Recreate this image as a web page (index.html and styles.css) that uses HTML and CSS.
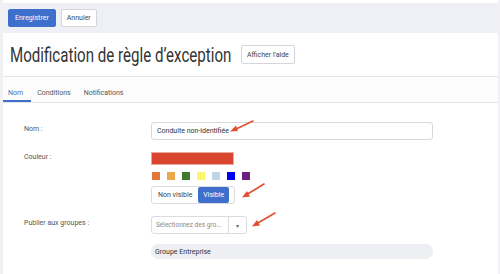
FILE: index.html
```html
<!DOCTYPE html>
<html lang="fr">
<head>
  <meta charset="UTF-8" />
  <title>Modification de règle d'exception</title>
  <link rel="stylesheet" href="styles.css">
</head>
<body>
  <div class="page">
    <div class="toolbar">
      <button class="btn btn-primary">Enregistrer</button>
      <button class="btn">Annuler</button>
    </div>

    <div class="heading">
      <h1><span class="title-text">Modification de règle d’exception</span></h1>
      <button class="btn btn-help">Afficher l'aide</button>
    </div>

    <div class="tabs">
      <span class="tab active">Nom</span>
      <span class="tab">Conditions</span>
      <span class="tab">Notifications</span>
    </div>

    <div class="form">
      <div class="row">
        <label class="lbl lbl-nom">Nom :</label>
        <input class="text-input" type="text" value="Conduite non-identifiée">
      </div>

      <div class="row">
        <label class="lbl lbl-couleur">Couleur :</label>
        <div class="color-field">
          <div class="color-bar"></div>
          <div class="swatches">
            <span class="sw" style="background:#e0773b"></span>
            <span class="sw" style="background:#eaa94e"></span>
            <span class="sw" style="background:#3e7a2c"></span>
            <span class="sw" style="background:#fbf66c"></span>
            <span class="sw" style="background:#bdd6e5"></span>
            <span class="sw" style="background:#0000f0"></span>
            <span class="sw" style="background:#6c1f7c"></span>
          </div>
          <div class="toggle">
            <span class="opt">Non visible</span>
            <span class="opt on">Visible</span>
          </div>
        </div>
      </div>

      <div class="row">
        <label class="lbl lbl-groupes">Publier aux groupes :</label>
        <div class="group-field">
          <div class="select">
            <span class="placeholder">Sélectionnez des gro...</span>
            <span class="caret">▾</span>
          </div>
          <div class="pill">Groupe Entreprise</div>
        </div>
      </div>
    </div>

    <svg class="arrows" width="500" height="274" viewBox="0 0 500 274">
      <g stroke="#e0502f" stroke-width="1.6" fill="#e0502f" stroke-linecap="round">
        <line x1="253" y1="121" x2="234" y2="130"/>
        <polygon points="230,131.5 236,125.5 238,131" stroke="none"/>
        <line x1="264" y1="184" x2="246" y2="195"/>
        <polygon points="242,197.5 247,191 250,196.5" stroke="none"/>
        <line x1="275" y1="213" x2="256" y2="224"/>
        <polygon points="252,226.5 257,220 260,225.5" stroke="none"/>
      </g>
    </svg>
  </div>
</body>
</html>
```

FILE: styles.css
```css
body {
  margin: 0;
  background: #f1f1f4;
  font-family: Roboto, "Liberation Sans", Arial, sans-serif;
  color: #333;
}

.page {
  position: relative;
  margin-left: 3px;
  margin-right: 2px;
  height: 274px;
  background: #fff;
  overflow: hidden;
}

.toolbar {
  margin-top: 3px;
  height: 30px;
  background: #eff0f5;
  display: flex;
  align-items: center;
  gap: 5px;
  padding-left: 5px;
}

.btn {
  font-family: inherit;
  font-size: 7px;
  height: 18px;
  padding: 0 5px;
  background: #fff;
  color: #444;
  border: 1px solid #d6d6da;
  border-radius: 2px;
}

.btn-primary {
  background: #3d6fcb;
  border-color: #3d6fcb;
  color: #fff;
  padding: 0 6px;
}

.heading {
  display: flex;
  align-items: center;
  gap: 4px;
  padding: 9px 0 0 7px;
  height: 34px;
  box-sizing: border-box;
  margin-bottom: 9px;
}

h1 {
  margin: 0;
  width: 227px;
  font-size: 20px;
  font-weight: 400;
  color: #333;
  line-height: 24px;
  white-space: nowrap;
}

.title-text {
  display: inline-block;
  transform: scaleX(0.755);
  transform-origin: left center;
}

.btn-help {
  height: 19px;
  padding: 0 5px;
}

.tabs {
  display: flex;
  height: 25px;
  background: #fcfcfc;
  border-top: 1px solid #e4e4e8;
  border-bottom: 1px solid #e4e4e8;
}

.tab {
  font-size: 7px;
  color: #555;
  padding: 12px 7px 0 7px;
}

.tab.active {
  color: #4d6fbe;
  padding: 12px 8px 0 5px;
  border-bottom: 2px solid #3d6fcb;
}

.tab + .tab {
  padding-left: 6px;
}

.form {
  padding: 19px 0 0 21px;
  display: flex;
  flex-direction: column;
  gap: 12px;
}

.row {
  display: grid;
  grid-template-columns: 127px 1fr;
}

.lbl {
  font-size: 7px;
  color: #555;
}

.lbl-nom { padding-top: 3px; }
.lbl-couleur { padding-top: 1px; }
.lbl-groupes { padding-top: 3px; }

.text-input {
  width: 282px;
  height: 18px;
  box-sizing: border-box;
  border: 1px solid #d8d8dc;
  border-radius: 3px;
  padding: 0 5px;
  font-family: inherit;
  font-size: 7px;
  color: #333;
}

.color-field {
  display: flex;
  flex-direction: column;
}

.color-bar {
  width: 83px;
  height: 13px;
  background: #d9452f;
  border: 1px solid #e9a99f;
  box-sizing: border-box;
}

.swatches {
  display: flex;
  gap: 7px;
  margin: 7px 0 0 1px;
}

.sw {
  width: 8px;
  height: 8px;
}

.toggle {
  display: flex;
  width: 84px;
  height: 18px;
  box-sizing: border-box;
  margin-top: 6px;
  border: 1px solid #dcdce0;
  border-radius: 3px;
  font-size: 7px;
}

.opt {
  display: flex;
  align-items: center;
  padding: 0 6px;
  color: #444;
}

.opt.on {
  background: #3d6fcb;
  color: #fff;
  border-radius: 2px;
  padding: 0 5px;
}

.group-field {
  display: flex;
  flex-direction: column;
  gap: 10px;
}

.select {
  display: flex;
  width: 96px;
  height: 18px;
  box-sizing: border-box;
  border: 1px solid #dcdce0;
  border-radius: 3px;
  font-size: 6.5px;
}

.placeholder {
  flex: 1;
  display: flex;
  align-items: center;
  padding-left: 4px;
  color: #888;
  border-right: 1px solid #dcdce0;
}

.caret {
  width: 17px;
  display: flex;
  align-items: center;
  justify-content: center;
  color: #666;
  font-size: 6px;
}

.pill {
  width: 282px;
  height: 15px;
  box-sizing: border-box;
  background: #eeeff3;
  border-radius: 8px;
  padding: 0 4px;
  display: flex;
  align-items: center;
  font-size: 7px;
  color: #333;
}

.arrows {
  position: absolute;
  left: -3px;
  top: 0;
}
```
